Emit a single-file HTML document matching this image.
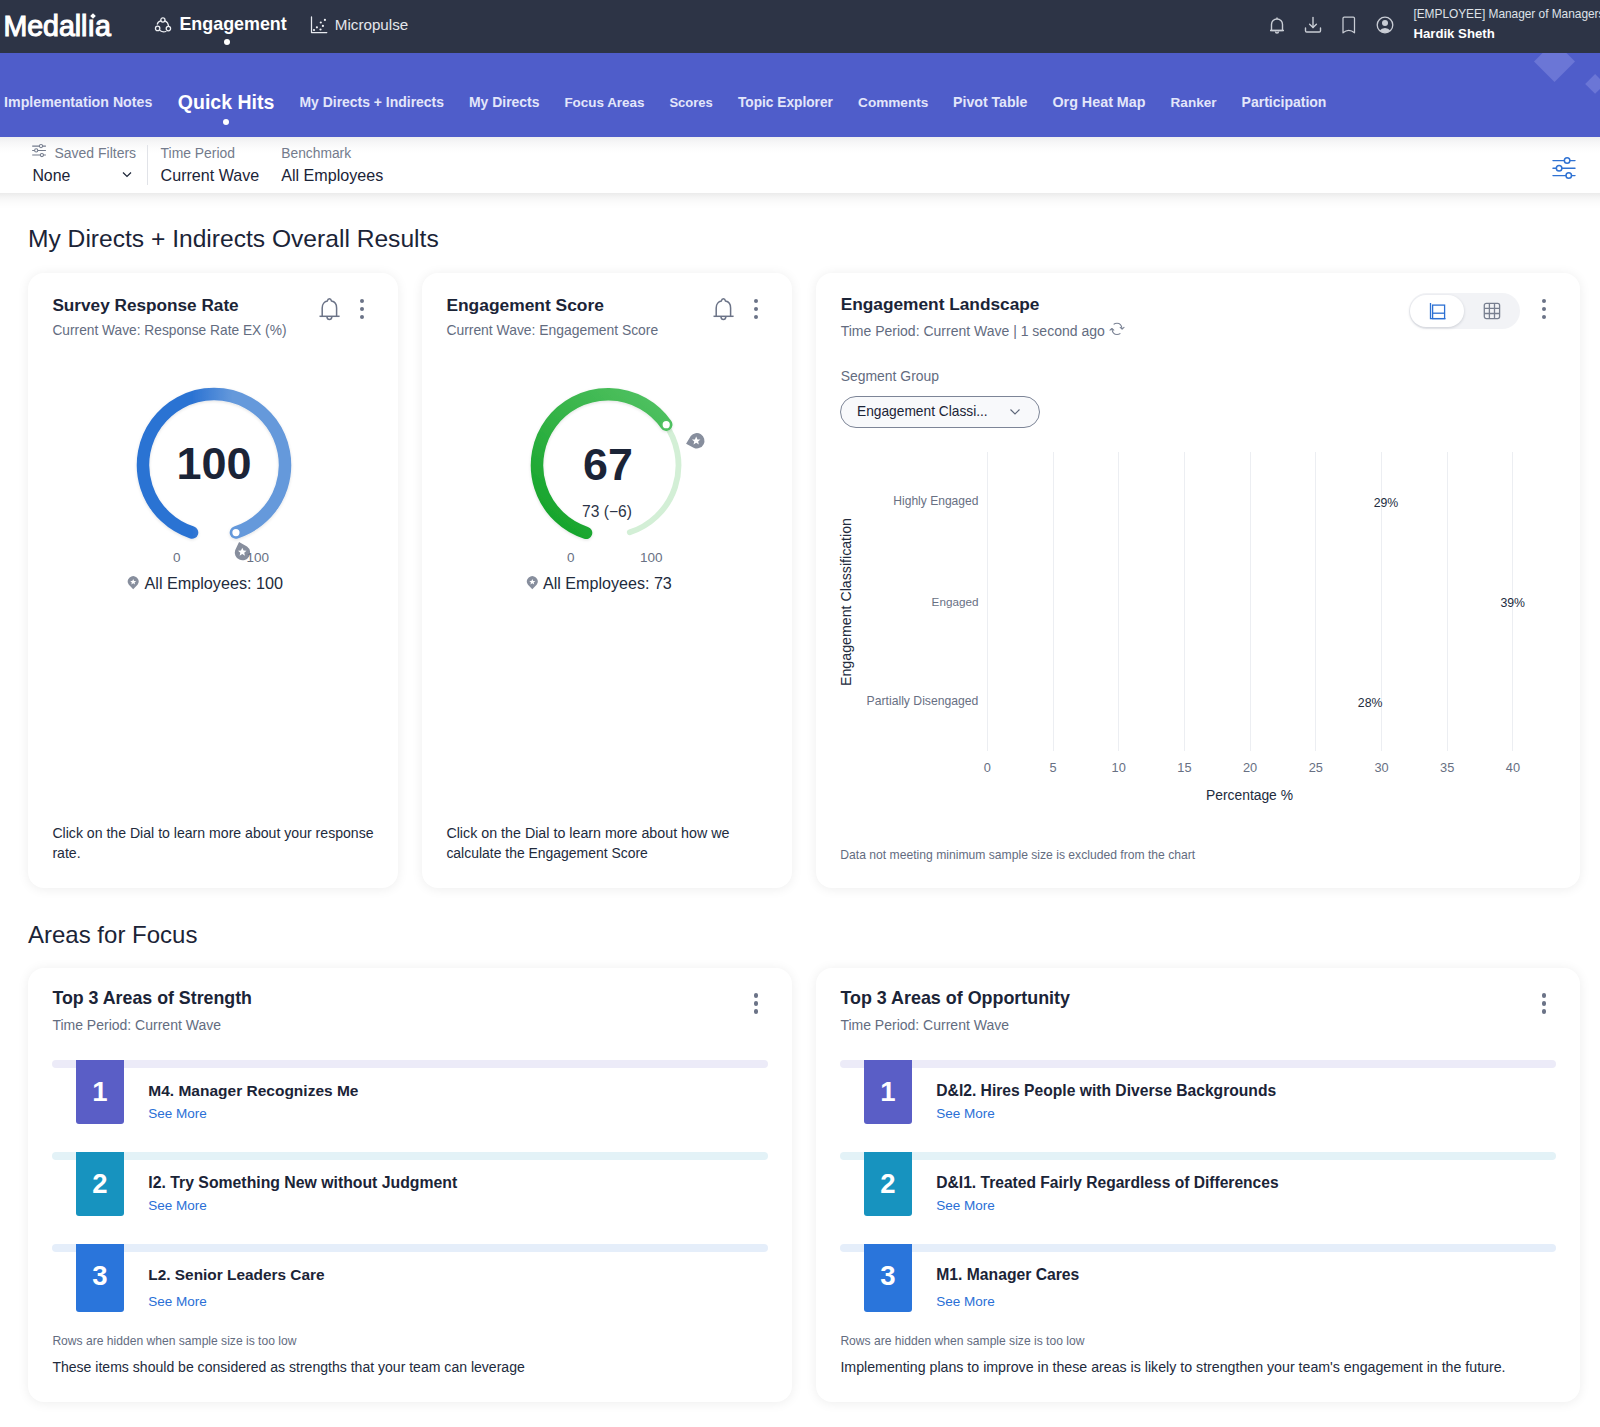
<!DOCTYPE html>
<html><head><meta charset="utf-8"><style>
*{box-sizing:border-box;margin:0;padding:0}
html,body{width:1600px;height:1427px;overflow:hidden;background:#fff;font-family:"Liberation Sans",sans-serif;color:#1b2437}
.t{position:absolute;white-space:nowrap;line-height:1}
.b{position:absolute}
.card{position:absolute;background:#fff;border-radius:16px;box-shadow:0 1px 12px rgba(0,0,0,0.075)}
svg{position:absolute;overflow:visible}
</style></head><body>
<div class="b" style="left:0;top:0;width:1600px;height:53px;background:#2d3446"></div>
<div class="t" style="left:3.6px;top:11.89px;font-size:28.6px;font-weight:normal;color:#fff;letter-spacing:-0.1px;-webkit-text-stroke:1.1px #fff">Medall&#305;a</div>
<div class="b" style="left:90.6px;top:13.9px;width:4px;height:4px;background:#fff;transform:rotate(45deg)"></div>
<svg style="left:150px;top:12px" width="26" height="26" viewBox="0 0 26 26"><g fill="none" stroke="#eceef3" stroke-width="1.25" stroke-linecap="round"><circle cx="12.9" cy="8" r="2.1"/><circle cx="7.65" cy="16.4" r="2.2"/><circle cx="18.4" cy="16.6" r="2.2"/><path d="M10.8 8.9 Q8 9.4 7.3 12.2"/><path d="M15 8.9 Q18.2 10.4 18.6 14.2"/><path d="M9.9 18.5 Q12.6 20.5 15.9 19.5"/></g></svg>
<div class="t" style="left:179.4px;top:15.99px;font-size:17.9px;font-weight:bold;color:#fff;">Engagement</div>
<div class="b" style="left:224px;top:39px;width:6px;height:6px;border-radius:3px;background:#fff"></div>
<svg style="left:306px;top:12px" width="26" height="26" viewBox="0 0 26 26"><path d="M5.5 4.9 V20.6 H20.8" fill="none" stroke="#e8eaf0" stroke-width="1.25" stroke-linecap="round" stroke-linejoin="round"/><g fill="#eef0f4"><circle cx="8" cy="18" r="1.1"/><circle cx="10.9" cy="15.3" r="1.1"/><circle cx="14.5" cy="17.5" r="1.1"/><circle cx="14.8" cy="10.5" r="1.1"/><circle cx="16.9" cy="13.9" r="1.1"/><circle cx="18.9" cy="7.9" r="1.1"/></g></svg>
<div class="t" style="left:334.8px;top:17.28px;font-size:15.2px;font-weight:normal;color:#e4e6ec;">Micropulse</div>
<svg style="left:1268px;top:16px" width="18" height="18" viewBox="0 0 18 18"><g fill="none" stroke="#c9cdd5" stroke-width="1.4"><path d="M3.5 14.5 V8.5 A5.5 5.5 0 0 1 14.5 8.5 V14.5 Z" stroke-linejoin="round"/><path d="M2 14.5 H16"/><path d="M9 1.5 V3"/><path d="M7.5 15.5 A1.5 1.5 0 0 0 10.5 15.5"/></g></svg>
<svg style="left:1304px;top:16px" width="18" height="18" viewBox="0 0 18 18"><g fill="none" stroke="#c9cdd5" stroke-width="1.4" stroke-linecap="round" stroke-linejoin="round"><path d="M9 1.5 V11.5"/><path d="M5.6 8.3 L9 11.6 L12.4 8.3"/><path d="M1.5 12 V14.8 Q1.5 16 2.7 16 H15.3 Q16.5 16 16.5 14.8 V12"/></g></svg>
<svg style="left:1342px;top:16px" width="14" height="18" viewBox="0 0 14 18"><g fill="none" stroke="#c9cdd5" stroke-width="1.25" stroke-linejoin="round"><path d="M1 16.8 V2.2 Q1 1 2.2 1 H11.3 Q12.5 1 12.5 2.2 V16.8 Q6.75 12 1 16.8 Z"/></g></svg>
<svg style="left:1376px;top:16px" width="18" height="18" viewBox="0 0 18 18"><circle cx="9" cy="9" r="7.8" fill="none" stroke="#c9cdd5" stroke-width="1.3"/><circle cx="9" cy="7" r="3" fill="#c9cdd5"/><path d="M3.8 14.6 A6 5 0 0 1 14.2 14.6 A7.6 7.6 0 0 1 3.8 14.6Z" fill="#c9cdd5"/></svg>
<div class="t" style="left:1413.4px;top:9.38px;font-size:11.9px;font-weight:normal;color:#dfe2e8;letter-spacing:-0.02px">[EMPLOYEE] Manager of Managers</div>
<div class="t" style="left:1413.4px;top:26.58px;font-size:13.2px;font-weight:bold;color:#fff;">Hardik Sheth</div>
<div class="b" style="left:0;top:53px;width:1600px;height:84px;background:#4f5dca;overflow:hidden"><div class="b" style="left:1539.5px;top:-5.8px;width:29px;height:29px;background:#6b76d6;transform:rotate(45deg)"></div><div class="b" style="left:1588.2px;top:24.1px;width:14.2px;height:14.2px;background:#6b76d6;transform:rotate(45deg)"></div></div>
<div class="t" style="left:4.1px;top:95.30px;font-size:14px;"><span style="display:inline-block;width:295.40px;font-size:14.19px;font-weight:bold;color:#e3e6fa;vertical-align:baseline">Implementation Notes</span><span style="display:inline-block;width:169.50px;font-size:13.95px;font-weight:bold;color:#e3e6fa;vertical-align:baseline">My Directs + Indirects</span><span style="display:inline-block;width:95.40px;font-size:13.94px;font-weight:bold;color:#e3e6fa;vertical-align:baseline">My Directs</span><span style="display:inline-block;width:105.00px;font-size:13.43px;font-weight:bold;color:#e3e6fa;vertical-align:baseline">Focus Areas</span><span style="display:inline-block;width:68.60px;font-size:13.04px;font-weight:bold;color:#e3e6fa;vertical-align:baseline">Scores</span><span style="display:inline-block;width:120.10px;font-size:13.71px;font-weight:bold;color:#e3e6fa;vertical-align:baseline">Topic Explorer</span><span style="display:inline-block;width:95.00px;font-size:13.6px;font-weight:bold;color:#e3e6fa;vertical-align:baseline">Comments</span><span style="display:inline-block;width:99.40px;font-size:14.14px;font-weight:bold;color:#e3e6fa;vertical-align:baseline">Pivot Table</span><span style="display:inline-block;width:118.10px;font-size:14.32px;font-weight:bold;color:#e3e6fa;vertical-align:baseline">Org Heat Map</span><span style="display:inline-block;width:71.00px;font-size:13.57px;font-weight:bold;color:#e3e6fa;vertical-align:baseline">Ranker</span><span style="display:inline-block;width:400.00px;font-size:14.03px;font-weight:bold;color:#e3e6fa;vertical-align:baseline">Participation</span></div>
<div class="t" style="left:177.8px;top:93.42px;font-size:19.5px;font-weight:bold;color:#fff;">Quick Hits</div>
<div class="b" style="left:223px;top:119px;width:6px;height:6px;border-radius:3px;background:#fff"></div>
<div class="b" style="left:0;top:137px;width:1600px;height:56px;background:linear-gradient(#eeeeef 0px,#f6f6f7 5px,#fdfdfd 12px,#fff 16px)"></div>
<div class="b" style="left:0;top:193px;width:1600px;height:16px;background:linear-gradient(rgba(0,0,0,0.08),rgba(0,0,0,0.035) 5px,rgba(0,0,0,0.01) 11px,rgba(0,0,0,0))"></div>
<svg style="left:32px;top:144px" width="15" height="13" viewBox="0 0 15 13"><g fill="none" stroke="#737b8c" stroke-width="1.05"><path d="M0.2 2.1H13.9M0.2 6.4H13.9M0.2 11H13.9"/></g><g fill="#fff" stroke="#737b8c" stroke-width="1.05"><circle cx="9" cy="2.1" r="1.6"/><circle cx="4.2" cy="6.4" r="1.6"/><circle cx="9.9" cy="11" r="1.6"/></g></svg>
<div class="t" style="left:54.4px;top:146.00px;font-size:14px;"><span style="display:inline-block;width:106.20px;font-size:14px;font-weight:normal;color:#737b8c;vertical-align:baseline">Saved Filters</span><span style="display:inline-block;width:120.70px;font-size:13.9px;font-weight:normal;color:#737b8c;vertical-align:baseline">Time Period</span><span style="display:inline-block;width:400.00px;font-size:13.8px;font-weight:normal;color:#737b8c;vertical-align:baseline">Benchmark</span></div>
<div class="t" style="left:32.4px;top:166.60px;font-size:16px;"><span style="display:inline-block;width:128.20px;font-size:15.9px;font-weight:normal;color:#1b2437;vertical-align:baseline">None</span><span style="display:inline-block;width:120.70px;font-size:16.1px;font-weight:normal;color:#1b2437;vertical-align:baseline">Current Wave</span><span style="display:inline-block;width:400.00px;font-size:16.1px;font-weight:normal;color:#1b2437;vertical-align:baseline">All Employees</span></div>
<svg style="left:122px;top:171px" width="10" height="7" viewBox="0 0 10 7"><path d="M1 1.5 L5 5.5 L9 1.5" fill="none" stroke="#1b2437" stroke-width="1.2"/></svg>
<div class="b" style="left:147px;top:145px;width:1px;height:40px;background:#e1e3e8"></div>
<svg style="left:1552px;top:157px" width="25" height="22" viewBox="0 0 25 22"><g fill="none" stroke="#2f72d3" stroke-width="1.45" stroke-linecap="round"><path d="M1 3.6H12.3M17.9 3.6H23"/><path d="M1 11.3H4.3M9.9 11.3H23"/><path d="M1 18.6H13.95M19.55 18.6H23"/></g><g fill="none" stroke="#2f72d3" stroke-width="1.5"><circle cx="15.1" cy="3.6" r="2.75"/><circle cx="7.1" cy="11.3" r="2.75"/><circle cx="16.75" cy="18.6" r="2.75"/></g></svg>
<div class="t" style="left:28px;top:226.79px;font-size:24.6px;font-weight:normal;color:#1b2437;">My Directs + Indirects Overall Results</div>
<div class="t" style="left:28px;top:922.60px;font-size:24px;font-weight:normal;color:#1b2437;">Areas for Focus</div>
<div class="card" style="left:28px;top:273px;width:370px;height:615px"></div>
<div class="card" style="left:422px;top:273px;width:370px;height:615px"></div>
<div class="card" style="left:816px;top:273px;width:764px;height:615px"></div>
<div class="card" style="left:28px;top:968px;width:764px;height:434px"></div>
<div class="card" style="left:816px;top:968px;width:764px;height:434px"></div>
<div class="t" style="left:52.4px;top:297.38px;font-size:17.2px;font-weight:bold;color:#1b2437;">Survey Response Rate</div>
<div class="t" style="left:52.4px;top:323.71px;font-size:13.75px;font-weight:normal;color:#636c7f;">Current Wave: Response Rate EX (%)</div>
<svg style="left:319.4px;top:297.5px" width="22" height="23" viewBox="0 0 22 23"><g fill="none" stroke="#6b7387" stroke-width="1.5" stroke-linejoin="round"><path d="M3.2 18.3 V10 C3.2 6.2 5.6 3.6 8.3 3.1 C8.6 1.6 9.4 0.8 10.4 0.8 C11.4 0.8 12.2 1.6 12.5 3.1 C15.3 3.6 17.6 6.2 17.6 10 V18.3"/><path d="M0.5 18.3 H20.6"/><path d="M7.9 18.6 C8.1 20.6 9.2 21.5 10.4 21.5 C11.6 21.5 12.7 20.6 12.9 18.6"/></g></svg>
<div class="b" style="left:359.9px;top:298.9px;width:4.2px;height:4.2px;border-radius:50%;background:#6b7387"></div>
<div class="b" style="left:359.9px;top:306.9px;width:4.2px;height:4.2px;border-radius:50%;background:#6b7387"></div>
<div class="b" style="left:359.9px;top:314.9px;width:4.2px;height:4.2px;border-radius:50%;background:#6b7387"></div>
<svg style="left:0;top:0" width="1600" height="1427" viewBox="0 0 1600 1427"><defs><linearGradient id="g1" gradientUnits="userSpaceOnUse" x1="134" y1="0" x2="288" y2="0"><stop offset="0.38" stop-color="#2c73d3"/><stop offset="0.64" stop-color="#6599db"/></linearGradient><filter id="shg1" x="-20%" y="-20%" width="140%" height="140%"><feDropShadow dx="0" dy="1" stdDeviation="1.6" flood-color="#000" flood-opacity="0.12"/></filter></defs><path d="M192.06 532.53 A71 71 0 1 1 235.94 532.53" fill="none" stroke="url(#g1)" stroke-width="12.5" stroke-linecap="round" filter="url(#shg1)"/><circle cx="235.94" cy="532.53" r="4.6" fill="#fff" stroke="#6599db" stroke-width="2"/><g transform="translate(242.28,552.02) rotate(612.00) scale(1.22)"><path d="M8.6 0 L3.2 -5.1 A6.3 6.3 0 1 0 3.2 5.1 Z" fill="#878e9d"/><g transform="rotate(-612.00)"><path d="M0 -3.6 L1.05 -1.2 L3.5 -1.1 L1.6 0.5 L2.2 3 L0 1.6 L-2.2 3 L-1.6 0.5 L-3.5 -1.1 L-1.05 -1.2 Z" fill="#fff"/></g></g></svg>
<div class="t" style="left:214.1px;transform:translateX(-50%);top:440.75px;font-size:45px;font-weight:bold;color:#1b2437;">100</div>
<div class="t" style="left:173px;top:551.12px;font-size:13.5px;font-weight:normal;color:#697184;">0</div>
<div class="t" style="left:246.5px;top:551.12px;font-size:13.5px;font-weight:normal;color:#697184;">100</div>
<svg style="left:0;top:0" width="1600" height="1427"><g transform="translate(133.20,582.00) rotate(90.00) scale(0.85)"><path d="M8.6 0 L3.2 -5.1 A6.3 6.3 0 1 0 3.2 5.1 Z" fill="#878e9d"/><g transform="rotate(-90.00)"><path d="M0 -3.6 L1.05 -1.2 L3.5 -1.1 L1.6 0.5 L2.2 3 L0 1.6 L-2.2 3 L-1.6 0.5 L-3.5 -1.1 L-1.05 -1.2 Z" fill="#fff"/></g></g></svg>
<div class="t" style="left:144.5px;top:574.63px;font-size:16.2px;font-weight:normal;color:#222b3d;">All Employees: 100</div>
<div class="t" style="left:52.4px;top:826.22px;font-size:14.1px;font-weight:normal;color:#222b3d;">Click on the Dial to learn more about your response</div>
<div class="t" style="left:52.4px;top:845.81px;font-size:14.1px;font-weight:normal;color:#222b3d;">rate.</div>
<div class="t" style="left:446.4px;top:297.21px;font-size:17.4px;font-weight:bold;color:#1b2437;">Engagement Score</div>
<div class="t" style="left:446.4px;top:323.58px;font-size:13.9px;font-weight:normal;color:#636c7f;">Current Wave: Engagement Score</div>
<svg style="left:713.4px;top:297.5px" width="22" height="23" viewBox="0 0 22 23"><g fill="none" stroke="#6b7387" stroke-width="1.5" stroke-linejoin="round"><path d="M3.2 18.3 V10 C3.2 6.2 5.6 3.6 8.3 3.1 C8.6 1.6 9.4 0.8 10.4 0.8 C11.4 0.8 12.2 1.6 12.5 3.1 C15.3 3.6 17.6 6.2 17.6 10 V18.3"/><path d="M0.5 18.3 H20.6"/><path d="M7.9 18.6 C8.1 20.6 9.2 21.5 10.4 21.5 C11.6 21.5 12.7 20.6 12.9 18.6"/></g></svg>
<div class="b" style="left:753.9px;top:298.9px;width:4.2px;height:4.2px;border-radius:50%;background:#6b7387"></div>
<div class="b" style="left:753.9px;top:306.9px;width:4.2px;height:4.2px;border-radius:50%;background:#6b7387"></div>
<div class="b" style="left:753.9px;top:314.9px;width:4.2px;height:4.2px;border-radius:50%;background:#6b7387"></div>
<svg style="left:0;top:0" width="1600" height="1427" viewBox="0 0 1600 1427"><defs><linearGradient id="g2" gradientUnits="userSpaceOnUse" x1="560" y1="530" x2="670" y2="400"><stop offset="0" stop-color="#16a42b"/><stop offset="1" stop-color="#52c263"/></linearGradient><filter id="shg2" x="-20%" y="-20%" width="140%" height="140%"><feDropShadow dx="0" dy="1" stdDeviation="1.6" flood-color="#000" flood-opacity="0.12"/></filter></defs><path d="M586.21 532.35 A70.5 70.5 0 1 1 629.79 532.35" fill="none" stroke="#d3efd6" stroke-width="5.8" stroke-linecap="round"/><path d="M586.06 532.83 A71 71 0 1 1 666.22 424.66" fill="none" stroke="url(#g2)" stroke-width="12.5" stroke-linecap="round" filter="url(#shg2)"/><circle cx="666.22" cy="424.66" r="4.6" fill="#fff" stroke="#4fc061" stroke-width="2"/><g transform="translate(696.18,440.88) rotate(524.52) scale(1.22)"><path d="M8.6 0 L3.2 -5.1 A6.3 6.3 0 1 0 3.2 5.1 Z" fill="#878e9d"/><g transform="rotate(-524.52)"><path d="M0 -3.6 L1.05 -1.2 L3.5 -1.1 L1.6 0.5 L2.2 3 L0 1.6 L-2.2 3 L-1.6 0.5 L-3.5 -1.1 L-1.05 -1.2 Z" fill="#fff"/></g></g></svg>
<div class="t" style="left:608px;transform:translateX(-50%);top:441.92px;font-size:44.8px;font-weight:bold;color:#1b2437;">67</div>
<div class="t" style="left:607px;transform:translateX(-50%);top:504.24px;font-size:15.6px;font-weight:normal;color:#2c3447;">73 (&minus;6)</div>
<div class="t" style="left:567px;top:551.12px;font-size:13.5px;font-weight:normal;color:#697184;">0</div>
<div class="t" style="left:640px;top:551.12px;font-size:13.5px;font-weight:normal;color:#697184;">100</div>
<svg style="left:0;top:0" width="1600" height="1427"><g transform="translate(532.30,582.00) rotate(90.00) scale(0.85)"><path d="M8.6 0 L3.2 -5.1 A6.3 6.3 0 1 0 3.2 5.1 Z" fill="#878e9d"/><g transform="rotate(-90.00)"><path d="M0 -3.6 L1.05 -1.2 L3.5 -1.1 L1.6 0.5 L2.2 3 L0 1.6 L-2.2 3 L-1.6 0.5 L-3.5 -1.1 L-1.05 -1.2 Z" fill="#fff"/></g></g></svg>
<div class="t" style="left:543px;top:574.72px;font-size:16.1px;font-weight:normal;color:#222b3d;">All Employees: 73</div>
<div class="t" style="left:446.4px;top:826.07px;font-size:14.27px;font-weight:normal;color:#222b3d;">Click on the Dial to learn more about how we</div>
<div class="t" style="left:446.4px;top:846.74px;font-size:13.95px;font-weight:normal;color:#222b3d;">calculate the Engagement Score</div>
<div class="t" style="left:840.7px;top:295.50px;font-size:17.3px;font-weight:bold;color:#1b2437;">Engagement Landscape</div>
<div class="t" style="left:840.7px;top:323.50px;font-size:14.0px;font-weight:normal;color:#636c7f;">Time Period: Current Wave | 1 second ago</div>
<svg style="left:1109px;top:321px" width="16" height="15" viewBox="0 0 16 15"><g fill="none" stroke="#7a8294" stroke-width="1.1" stroke-linecap="round" stroke-linejoin="round"><path d="M5 3.2 C5.6 2.5 6.5 2.2 8 2.2 C10.6 2.2 12.6 4.2 13 7.6"/><path d="M11.2 6.4 L13.1 8.1 L15 6.4"/><path d="M11 12.7 C10.4 13.2 9.5 13.5 8 13.5 C5.3 13.5 3.4 11.5 3 8.2"/><path d="M1 9.2 L2.9 7.5 L4.8 9.2"/></g></svg>
<div class="b" style="left:1408.5px;top:292.5px;width:111.5px;height:36px;border-radius:18px;background:#f2f3f6"></div>
<div class="b" style="left:1410px;top:294.5px;width:54px;height:32.5px;border-radius:16.25px;background:#fff;box-shadow:0 1px 3px rgba(30,40,60,0.18)"></div>
<svg style="left:1429px;top:302px" width="18" height="18" viewBox="0 0 18 18"><g fill="none" stroke="#2c70d3" stroke-width="1.3"><path d="M1.5 1 V16.6 H16.5"/><rect x="3.6" y="3.1" width="12" height="13.5"/><path d="M3.6 11.2 H15.6"/></g></svg>
<svg style="left:1483px;top:302px" width="18" height="18" viewBox="0 0 18 18"><g fill="none" stroke="#787f90" stroke-width="1.3"><rect x="1.3" y="1.3" width="15.3" height="15.3" rx="2"/><path d="M1.3 6.4H16.6M1.3 11.5H16.6M6.4 1.3V16.6M11.5 1.3V16.6"/></g></svg>
<div class="b" style="left:1541.9px;top:298.9px;width:4.2px;height:4.2px;border-radius:50%;background:#6b7387"></div>
<div class="b" style="left:1541.9px;top:306.9px;width:4.2px;height:4.2px;border-radius:50%;background:#6b7387"></div>
<div class="b" style="left:1541.9px;top:314.9px;width:4.2px;height:4.2px;border-radius:50%;background:#6b7387"></div>
<div class="t" style="left:840.7px;top:370.14px;font-size:13.95px;font-weight:normal;color:#636c7f;">Segment Group</div>
<div class="b" style="left:840px;top:396px;width:200px;height:32px;border-radius:16px;border:1px solid #7d8597;background:#f8f9fb"></div>
<div class="t" style="left:857px;top:405.11px;font-size:13.75px;font-weight:normal;color:#1b2437;">Engagement Classi...</div>
<svg style="left:1009px;top:408px" width="12" height="8" viewBox="0 0 12 8"><path d="M1.5 1.5 L6 6 L10.5 1.5" fill="none" stroke="#5d6679" stroke-width="1.1"/></svg>
<div class="b" style="left:986.80px;top:452px;width:1px;height:299px;background:#eceef2"></div><div class="b" style="left:1052.50px;top:452px;width:1px;height:299px;background:#eceef2"></div><div class="b" style="left:1118.20px;top:452px;width:1px;height:299px;background:#eceef2"></div><div class="b" style="left:1183.90px;top:452px;width:1px;height:299px;background:#eceef2"></div><div class="b" style="left:1249.60px;top:452px;width:1px;height:299px;background:#eceef2"></div><div class="b" style="left:1315.30px;top:452px;width:1px;height:299px;background:#eceef2"></div><div class="b" style="left:1381.00px;top:452px;width:1px;height:299px;background:#eceef2"></div><div class="b" style="left:1446.70px;top:452px;width:1px;height:299px;background:#eceef2"></div><div class="b" style="left:1512.40px;top:452px;width:1px;height:299px;background:#eceef2"></div>
<div class="t" style="left:987.3px;transform:translateX(-50%);top:762.12px;font-size:12.8px;font-weight:normal;color:#687083;">0</div>
<div class="t" style="left:1053.0px;transform:translateX(-50%);top:762.12px;font-size:12.8px;font-weight:normal;color:#687083;">5</div>
<div class="t" style="left:1118.7px;transform:translateX(-50%);top:762.12px;font-size:12.8px;font-weight:normal;color:#687083;">10</div>
<div class="t" style="left:1184.4px;transform:translateX(-50%);top:762.12px;font-size:12.8px;font-weight:normal;color:#687083;">15</div>
<div class="t" style="left:1250.1px;transform:translateX(-50%);top:762.12px;font-size:12.8px;font-weight:normal;color:#687083;">20</div>
<div class="t" style="left:1315.8px;transform:translateX(-50%);top:762.12px;font-size:12.8px;font-weight:normal;color:#687083;">25</div>
<div class="t" style="left:1381.5px;transform:translateX(-50%);top:762.12px;font-size:12.8px;font-weight:normal;color:#687083;">30</div>
<div class="t" style="left:1447.2px;transform:translateX(-50%);top:762.12px;font-size:12.8px;font-weight:normal;color:#687083;">35</div>
<div class="t" style="left:1512.9px;transform:translateX(-50%);top:762.12px;font-size:12.8px;font-weight:normal;color:#687083;">40</div>
<div class="t" style="right:621.6px;top:495.06px;font-size:12.05px;font-weight:normal;color:#687083;">Highly Engaged</div>
<div class="t" style="right:621.6px;top:595.55px;font-size:11.7px;font-weight:normal;color:#687083;">Engaged</div>
<div class="t" style="right:621.6px;top:694.94px;font-size:12.19px;font-weight:normal;color:#687083;">Partially Disengaged</div>
<div class="t" style="left:1373.7px;top:497.15px;font-size:12.3px;font-weight:normal;color:#222b3d;">29%</div>
<div class="t" style="left:1500.4px;top:597.04px;font-size:12.3px;font-weight:normal;color:#222b3d;">39%</div>
<div class="t" style="left:1357.8px;top:697.04px;font-size:12.3px;font-weight:normal;color:#222b3d;">28%</div>
<div class="t" style="left:1249.5px;transform:translateX(-50%);top:789.23px;font-size:13.85px;font-weight:normal;color:#222b3d;">Percentage %</div>
<div class="t" style="left:851px;top:601.5px;font-size:14.2px;color:#222b3d;transform-origin:0 0;transform:rotate(-90deg) translate(-50%,-12.1px)">Engagement Classification</div>
<div class="t" style="left:840.3px;top:848.67px;font-size:12.15px;font-weight:normal;color:#636c7f;">Data not meeting minimum sample size is excluded from the chart</div>
<div class="t" style="left:52.4px;top:990.07px;font-size:17.8px;font-weight:bold;color:#1b2437;">Top 3 Areas of Strength</div>
<div class="t" style="left:52.4px;top:1018.40px;font-size:14.0px;font-weight:normal;color:#636c7f;">Time Period: Current Wave</div>
<div class="b" style="left:753.9px;top:993.4px;width:4.2px;height:4.2px;border-radius:50%;background:#6b7387"></div>
<div class="b" style="left:753.9px;top:1001.4px;width:4.2px;height:4.2px;border-radius:50%;background:#6b7387"></div>
<div class="b" style="left:753.9px;top:1009.4px;width:4.2px;height:4.2px;border-radius:50%;background:#6b7387"></div>
<div class="b" style="left:52px;top:1060px;width:716px;height:8px;border-radius:4px;background:#ecebf8"></div>
<div class="b" style="left:76px;top:1060px;width:48px;height:64px;border-radius:0 0 3px 3px;background:#5a5ec6"></div>
<div class="t" style="left:100px;transform:translateX(-50%);top:1077.62px;font-size:27.5px;font-weight:bold;color:#fff;">1</div>
<div class="t" style="left:148.3px;top:1083.12px;font-size:15.5px;font-weight:bold;color:#1b2437;">M4. Manager Recognizes Me</div>
<div class="t" style="left:148.3px;top:1106.73px;font-size:13.5px;font-weight:normal;color:#2a6fd6;">See More</div>
<div class="b" style="left:52px;top:1152px;width:716px;height:8px;border-radius:4px;background:#e3f2f7"></div>
<div class="b" style="left:76px;top:1152px;width:48px;height:64px;border-radius:0 0 3px 3px;background:#1793bf"></div>
<div class="t" style="left:100px;transform:translateX(-50%);top:1169.62px;font-size:27.5px;font-weight:bold;color:#fff;">2</div>
<div class="t" style="left:148.3px;top:1174.87px;font-size:15.8px;font-weight:bold;color:#1b2437;">I2. Try Something New without Judgment</div>
<div class="t" style="left:148.3px;top:1198.73px;font-size:13.5px;font-weight:normal;color:#2a6fd6;">See More</div>
<div class="b" style="left:52px;top:1244px;width:716px;height:8px;border-radius:4px;background:#e5eefa"></div>
<div class="b" style="left:76px;top:1244px;width:48px;height:68px;border-radius:0 0 3px 3px;background:#2a75db"></div>
<div class="t" style="left:100px;transform:translateX(-50%);top:1261.83px;font-size:27.5px;font-weight:bold;color:#fff;">3</div>
<div class="t" style="left:148.3px;top:1267.41px;font-size:15.4px;font-weight:bold;color:#1b2437;">L2. Senior Leaders Care</div>
<div class="t" style="left:148.3px;top:1294.73px;font-size:13.5px;font-weight:normal;color:#2a6fd6;">See More</div>
<div class="t" style="left:52.4px;top:1334.71px;font-size:12.1px;font-weight:normal;color:#636c7f;">Rows are hidden when sample size is too low</div>
<div class="t" style="left:52.4px;top:1360.36px;font-size:14.05px;font-weight:normal;color:#222b3d;">These items should be considered as strengths that your team can leverage</div>
<div class="t" style="left:840.4px;top:989.99px;font-size:17.9px;font-weight:bold;color:#1b2437;">Top 3 Areas of Opportunity</div>
<div class="t" style="left:840.4px;top:1018.40px;font-size:14.0px;font-weight:normal;color:#636c7f;">Time Period: Current Wave</div>
<div class="b" style="left:1541.9px;top:993.4px;width:4.2px;height:4.2px;border-radius:50%;background:#6b7387"></div>
<div class="b" style="left:1541.9px;top:1001.4px;width:4.2px;height:4.2px;border-radius:50%;background:#6b7387"></div>
<div class="b" style="left:1541.9px;top:1009.4px;width:4.2px;height:4.2px;border-radius:50%;background:#6b7387"></div>
<div class="b" style="left:840px;top:1060px;width:716px;height:8px;border-radius:4px;background:#ecebf8"></div>
<div class="b" style="left:864px;top:1060px;width:48px;height:64px;border-radius:0 0 3px 3px;background:#5a5ec6"></div>
<div class="t" style="left:888px;transform:translateX(-50%);top:1077.62px;font-size:27.5px;font-weight:bold;color:#fff;">1</div>
<div class="t" style="left:936.3px;top:1083.00px;font-size:15.65px;font-weight:bold;color:#1b2437;">D&amp;I2. Hires People with Diverse Backgrounds</div>
<div class="t" style="left:936.3px;top:1106.73px;font-size:13.5px;font-weight:normal;color:#2a6fd6;">See More</div>
<div class="b" style="left:840px;top:1152px;width:716px;height:8px;border-radius:4px;background:#e3f2f7"></div>
<div class="b" style="left:864px;top:1152px;width:48px;height:64px;border-radius:0 0 3px 3px;background:#1793bf"></div>
<div class="t" style="left:888px;transform:translateX(-50%);top:1169.62px;font-size:27.5px;font-weight:bold;color:#fff;">2</div>
<div class="t" style="left:936.3px;top:1175.04px;font-size:15.6px;font-weight:bold;color:#1b2437;">D&amp;I1. Treated Fairly Regardless of Differences</div>
<div class="t" style="left:936.3px;top:1198.73px;font-size:13.5px;font-weight:normal;color:#2a6fd6;">See More</div>
<div class="b" style="left:840px;top:1244px;width:716px;height:8px;border-radius:4px;background:#e5eefa"></div>
<div class="b" style="left:864px;top:1244px;width:48px;height:68px;border-radius:0 0 3px 3px;background:#2a75db"></div>
<div class="t" style="left:888px;transform:translateX(-50%);top:1261.83px;font-size:27.5px;font-weight:bold;color:#fff;">3</div>
<div class="t" style="left:936.3px;top:1267.15px;font-size:15.7px;font-weight:bold;color:#1b2437;">M1. Manager Cares</div>
<div class="t" style="left:936.3px;top:1294.73px;font-size:13.5px;font-weight:normal;color:#2a6fd6;">See More</div>
<div class="t" style="left:840.4px;top:1334.71px;font-size:12.1px;font-weight:normal;color:#636c7f;">Rows are hidden when sample size is too low</div>
<div class="t" style="left:840.4px;top:1360.23px;font-size:14.2px;font-weight:normal;color:#222b3d;">Implementing plans to improve in these areas is likely to strengthen your team's engagement in the future.</div>
</body></html>
